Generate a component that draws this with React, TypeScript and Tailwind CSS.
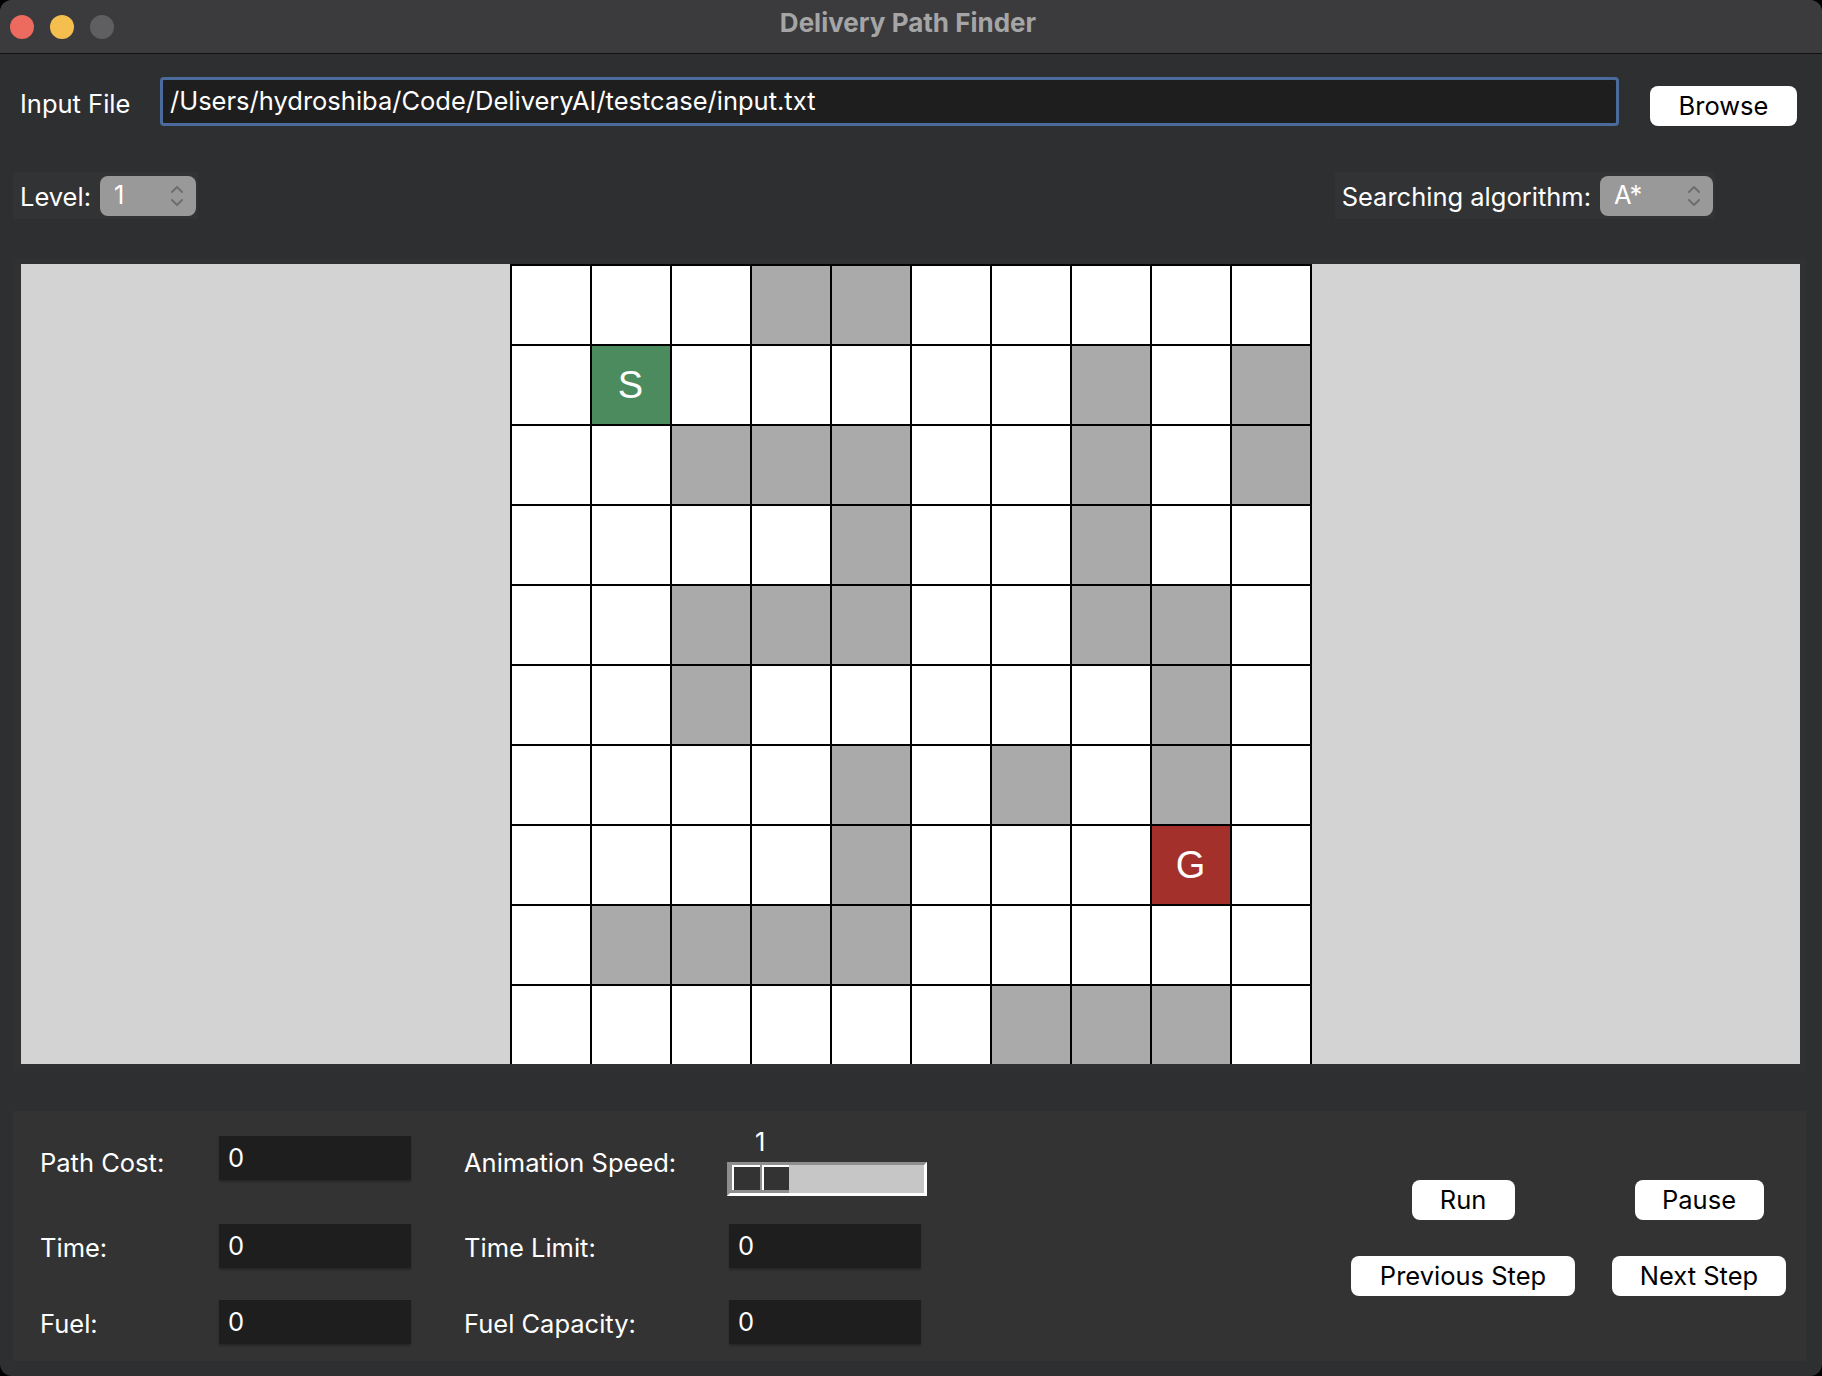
import React from 'react';

// 0 = free, 1 = wall, 2 = start, 3 = goal
const MAP: number[][] = [
  [0, 0, 0, 1, 1, 0, 0, 0, 0, 0],
  [0, 2, 0, 0, 0, 0, 0, 1, 0, 1],
  [0, 0, 1, 1, 1, 0, 0, 1, 0, 1],
  [0, 0, 0, 0, 1, 0, 0, 1, 0, 0],
  [0, 0, 1, 1, 1, 0, 0, 1, 1, 0],
  [0, 0, 1, 0, 0, 0, 0, 0, 1, 0],
  [0, 0, 0, 0, 1, 0, 1, 0, 1, 0],
  [0, 0, 0, 0, 1, 0, 0, 0, 3, 0],
  [0, 1, 1, 1, 1, 0, 0, 0, 0, 0],
  [0, 0, 0, 0, 0, 0, 1, 1, 1, 0],
];

function Chevrons() {
  return (
    <svg width="14" height="24" viewBox="0 0 14 24" fill="none" stroke="#6e6e6e" strokeWidth="2" strokeLinecap="round" strokeLinejoin="round">
      <path d="M2 8 L7 3 L12 8" />
      <path d="M2 16 L7 21 L12 16" />
    </svg>
  );
}

function Cell({ kind }: { kind: number }) {
  if (kind === 1) return <div className="bg-[#aaaaaa]" />;
  if (kind === 2)
    return <div className="bg-[#4b8b5d] flex items-center justify-center text-white text-[38px] leading-none" style={{ fontFamily: '"Liberation Sans", Arial, sans-serif' }}>S</div>;
  if (kind === 3)
    return <div className="bg-[#a3302b] flex items-center justify-center text-white text-[38px] leading-none" style={{ fontFamily: '"Liberation Sans", Arial, sans-serif' }}>G</div>;
  return <div className="bg-white" />;
}

function Field({ value }: { value: string }) {
  return (
    <div className="w-[192px] h-[44px] bg-[#1e1e1e] shadow-[0_2px_2px_rgba(0,0,0,0.25)] flex items-center pl-[9px] text-white">
      {value}
    </div>
  );
}

function Btn({ label, w }: { label: string; w: string }) {
  return (
    <button className={`${w} h-[40px] bg-white rounded-[8px] text-black text-[25.5px] flex items-center justify-center`}>
      {label}
    </button>
  );
}

export default function App() {
  return (
    <div className="w-[1822px] h-[1376px] bg-black" style={{ fontFamily: 'Inter, "Liberation Sans", sans-serif' }}>
      <div className="w-full h-full bg-[#2e2f31] rounded-[12px] overflow-hidden flex flex-col text-white text-[25.5px]">
        {/* Title bar */}
        <div className="h-[54px] shrink-0 bg-[#3b3b3d] border-b border-[#111] flex items-center relative">
          <div className="flex items-center gap-[16px] pl-[10px]">
            <span className="w-[24px] h-[24px] rounded-full bg-[#ec6a5e]" />
            <span className="w-[24px] h-[24px] rounded-full bg-[#f4bf4f]" />
            <span className="w-[24px] h-[24px] rounded-full bg-[#5f5f61]" />
          </div>
          <div className="absolute inset-0 flex items-center justify-center text-[26px] font-bold text-[#a5a5a5] pb-[8px] pr-[6px]">
            Delivery Path Finder
          </div>
        </div>

        {/* Input file row */}
        <div className="flex items-start mt-[23px] pl-[20px] h-[49px]">
          <span className="w-[140px] mt-[12px] leading-[30px]">Input File</span>
          <div className="w-[1459px] h-[49px] border-[3px] border-[#4a6b9c] rounded-[4px] bg-[#1e1e1e] flex items-center pl-[7px]">
            /Users/hydroshiba/Code/DeliveryAI/testcase/input.txt
          </div>
          <Btn label="Browse" w="w-[147px] ml-[31px] mt-[9px] h-[38px]" />
        </div>

        {/* Level / algorithm row */}
        <div className="flex items-center justify-between mt-[46px] pl-[13px] pr-[107px] h-[47px]">
          <div className="h-[47px] bg-[#323335] flex items-center pl-[7px] pr-[2px]">
            <span className="pt-[3px]">Level:</span>
            <div className="ml-[9px] w-[96px] h-[40px] rounded-[8px] bg-[#999999] flex items-center justify-between pl-[14px] pr-[12px]">
              <span>1</span>
              <Chevrons />
            </div>
          </div>
          <div className="h-[47px] bg-[#323335] flex items-center pl-[7px] pr-[2px]">
            <span className="pt-[3px]">Searching algorithm:</span>
            <div className="ml-[9px] w-[113px] h-[40px] rounded-[8px] bg-[#999999] flex items-center justify-between pl-[14px] pr-[12px]">
              <span>A*</span>
              <Chevrons />
            </div>
          </div>
        </div>

        {/* Grid panel */}
        <div className="mt-[39px] ml-[13px] mr-[16px] bg-[#303133] pt-[6px] pb-[7px] pl-[8px] pr-[6px]">
          <div className="h-[800px] bg-[#d3d3d3] flex justify-center overflow-hidden">
            <div className="w-[802px] h-[800px] bg-black pt-[2px] px-[2px] grid grid-cols-10 grid-rows-[repeat(10,78px)] gap-[2px]">
              {MAP.flatMap((row, r) => row.map((k, c) => <Cell key={`${r}-${c}`} kind={k} />))}
            </div>
          </div>
        </div>

        {/* Bottom panel */}
        <div className="mt-[40px] ml-[13px] mr-[16px] h-[250px] bg-[#333333] flex">
          <div className="pl-[27px] pt-[25px] flex flex-col">
            <div className="flex h-[44px]">
              <span className="w-[179px] pt-[8px]">Path Cost:</span>
              <Field value="0" />
              <span className="w-[316px] pl-[53px] pt-[8px]">Animation Speed:</span>
              <div className="relative w-[200px]">
                <span className="absolute left-[28px] -top-[13px]">1</span>
                <div className="absolute left-0 top-[26px] w-[200px] h-[34px] border-[3px] border-t-[#8e8e8e] border-l-[#8e8e8e] border-r-white border-b-white bg-[#c6c6c6] flex">
                  <div className="w-[59px] h-full bg-[#8e8e8e] flex gap-[2px] pb-[3px] pl-[2px]">
                    <div className="flex-1 bg-[#333333] border-t-[2px] border-l-[2px] border-white" />
                    <div className="flex-1 bg-[#333333] border-t-[2px] border-l-[2px] border-white" />
                  </div>
                </div>
              </div>
            </div>

            <div className="flex h-[44px] mt-[44px]">
              <span className="w-[179px] pt-[5px]">Time:</span>
              <Field value="0" />
              <span className="w-[316px] pl-[53px] pt-[5px]">Time Limit:</span>
              <div className="pl-[2px]">
                <Field value="0" />
              </div>
            </div>

            <div className="flex h-[44px] mt-[32px]">
              <span className="w-[179px] pt-[5px]">Fuel:</span>
              <Field value="0" />
              <span className="w-[316px] pl-[53px] pt-[5px]">Fuel Capacity:</span>
              <div className="pl-[2px]">
                <Field value="0" />
              </div>
            </div>
          </div>

          <div className="ml-auto pr-[20px] pt-[69px]">
            <div className="grid grid-cols-[224px_174px] gap-x-[37px] gap-y-[36px] justify-items-center">
              <Btn label="Run" w="w-[103px]" />
              <Btn label="Pause" w="w-[129px]" />
              <Btn label="Previous Step" w="w-[224px]" />
              <Btn label="Next Step" w="w-[174px]" />
            </div>
          </div>
        </div>
      </div>
    </div>
  );
}
